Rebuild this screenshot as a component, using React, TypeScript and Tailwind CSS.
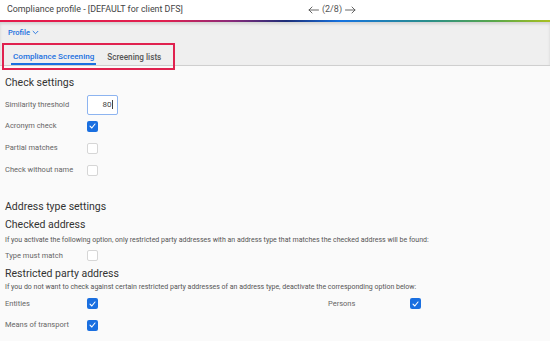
import React from 'react';

function Checkbox({ checked }: { checked: boolean }) {
    if (checked) {
        return (
            <span className="flex h-[11px] w-[11px] items-center justify-center rounded-[2px] bg-[#1a6fe0]">
                <svg width="7" height="6" viewBox="0 0 7 6" fill="none">
                    <path d="M1 3.2 L2.8 5 L6 1" stroke="white" strokeWidth="1.1" strokeLinecap="round" strokeLinejoin="round" />
                </svg>
            </span>
        );
    }
    return <span className="block h-[11px] w-[11px] rounded-[2px] border border-[#d6d6d6] bg-white" />;
}

function Row({ label, children, h = 'h-[22px]' }: { label: string; children: React.ReactNode; h?: string }) {
    return (
        <div className={`flex items-center ${h}`}>
            <span className="w-[82px] text-[7.5px] text-[#666]">{label}</span>
            {children}
        </div>
    );
}

function Arrow({ left }: { left?: boolean }) {
    return (
        <svg width="11" height="8" viewBox="0 0 11 8" fill="none" className={left ? '' : 'rotate-180'}>
            <path d="M10.5 4 H1 M4 1 L1 4 L4 7" stroke="#555" strokeWidth="0.9" strokeLinecap="round" strokeLinejoin="round" />
        </svg>
    );
}

export default function App() {
    return (
        <div className="h-[341px] w-[550px] overflow-hidden bg-[#fafafa] font-['Roboto',sans-serif]">
            {/* Top bar */}
            <div className="flex h-[20px] items-center bg-white px-[7px]">
                <span className="text-[8.9px] text-[#444]">Compliance profile - [DEFAULT for client DFS]</span>
                <span className="ml-[125px] flex items-center gap-[3px] text-[9px] text-[#555]">
                    <Arrow left />
                    <span>(2/8)</span>
                    <Arrow />
                </span>
            </div>
            <div className="h-[2px] bg-[linear-gradient(to_right,#e5194a_0%,#e0204f_30%,#8a2a7a_42%,#1d2e78_52%,#1673e0_62%,#2a8f8a_78%,#5aa84a_90%,#a8c020_100%)]" />

            {/* Sub header */}
            <div className="border-b border-[#cfcfcf] bg-[#efefef] shadow-[inset_0_2px_3px_rgba(0,0,0,0.12)]">
                <div className="flex h-[21px] items-center gap-[2px] px-[8px] text-[7.5px] font-medium text-[#1a6fe0]">
                    Profile
                    <svg width="7" height="5" viewBox="0 0 7 5" fill="none">
                        <path d="M0.8 1 L3.5 3.7 L6.2 1" stroke="#1a6fe0" strokeWidth="0.9" />
                    </svg>
                </div>
                <div className="relative flex h-[22px] items-stretch pl-[11px]">
                    <div className="flex items-center border-b-2 border-[#1a6fe0] px-[2px] pt-[6px] text-[8.1px] font-medium text-[#1a6fe0]">
                        Compliance Screening
                    </div>
                    <div className="flex items-center pl-[11px] pt-[6px] text-[8.2px] font-medium text-[#555]">
                        Screening lists
                    </div>
                    {/* highlight annotation */}
                    <div className="pointer-events-none absolute left-[2px] top-0 h-[27px] w-[173px] border-2 border-[#e0224f]" />
                </div>
            </div>

            {/* Body */}
            <div className="px-[5px] pt-[8px]">
                <h2 className="text-[10.5px] leading-[18px] text-[#333]">Check settings</h2>
                <div className="mt-[2px]">
                    <div className="flex h-[21px] items-center">
                        <span className="w-[82px] text-[7.5px] text-[#666]">Similarity threshold</span>
                        <div className="flex h-[20px] w-[31px] items-center justify-end rounded-[2px] border border-[#8db4f0] bg-white pr-[4px] text-[8px] text-[#444]">
                            80<span className="ml-[0.5px] h-[9px] w-[1px] bg-[#444]" />
                        </div>
                    </div>
                    <Row label="Acronym check"><Checkbox checked /></Row>
                    <Row label="Partial matches"><Checkbox checked={false} /></Row>
                    <Row label="Check without name"><Checkbox checked={false} /></Row>
                </div>

                <h2 className="mt-[17px] text-[10.5px] leading-[18px] text-[#333]">Address type settings</h2>
                <h3 className="text-[10.5px] leading-[18px] text-[#333]">Checked address</h3>
                <p className="text-[7px] leading-[12px] text-[#555]">
                    If you activate the following option, only restricted party addresses with an address type that matches the checked address will be found:
                </p>
                <Row label="Type must match" h="h-[19px]"><Checkbox checked={false} /></Row>
                <h3 className="text-[10.5px] leading-[17px] text-[#333]">Restricted party address</h3>
                <p className="text-[7px] leading-[11px] text-[#555]">
                    If you do not want to check against certain restricted party addresses of an address type, deactivate the corresponding option below:
                </p>
                <div className="flex">
                    <div className="w-[323px]">
                        <Row label="Entities" h="h-[21px]"><Checkbox checked /></Row>
                        <Row label="Means of transport"><Checkbox checked /></Row>
                    </div>
                    <div className="flex h-[21px] items-center">
                        <span className="w-[82px] text-[7.5px] text-[#666]">Persons</span>
                        <Checkbox checked />
                    </div>
                </div>
            </div>
        </div>
    );
}
